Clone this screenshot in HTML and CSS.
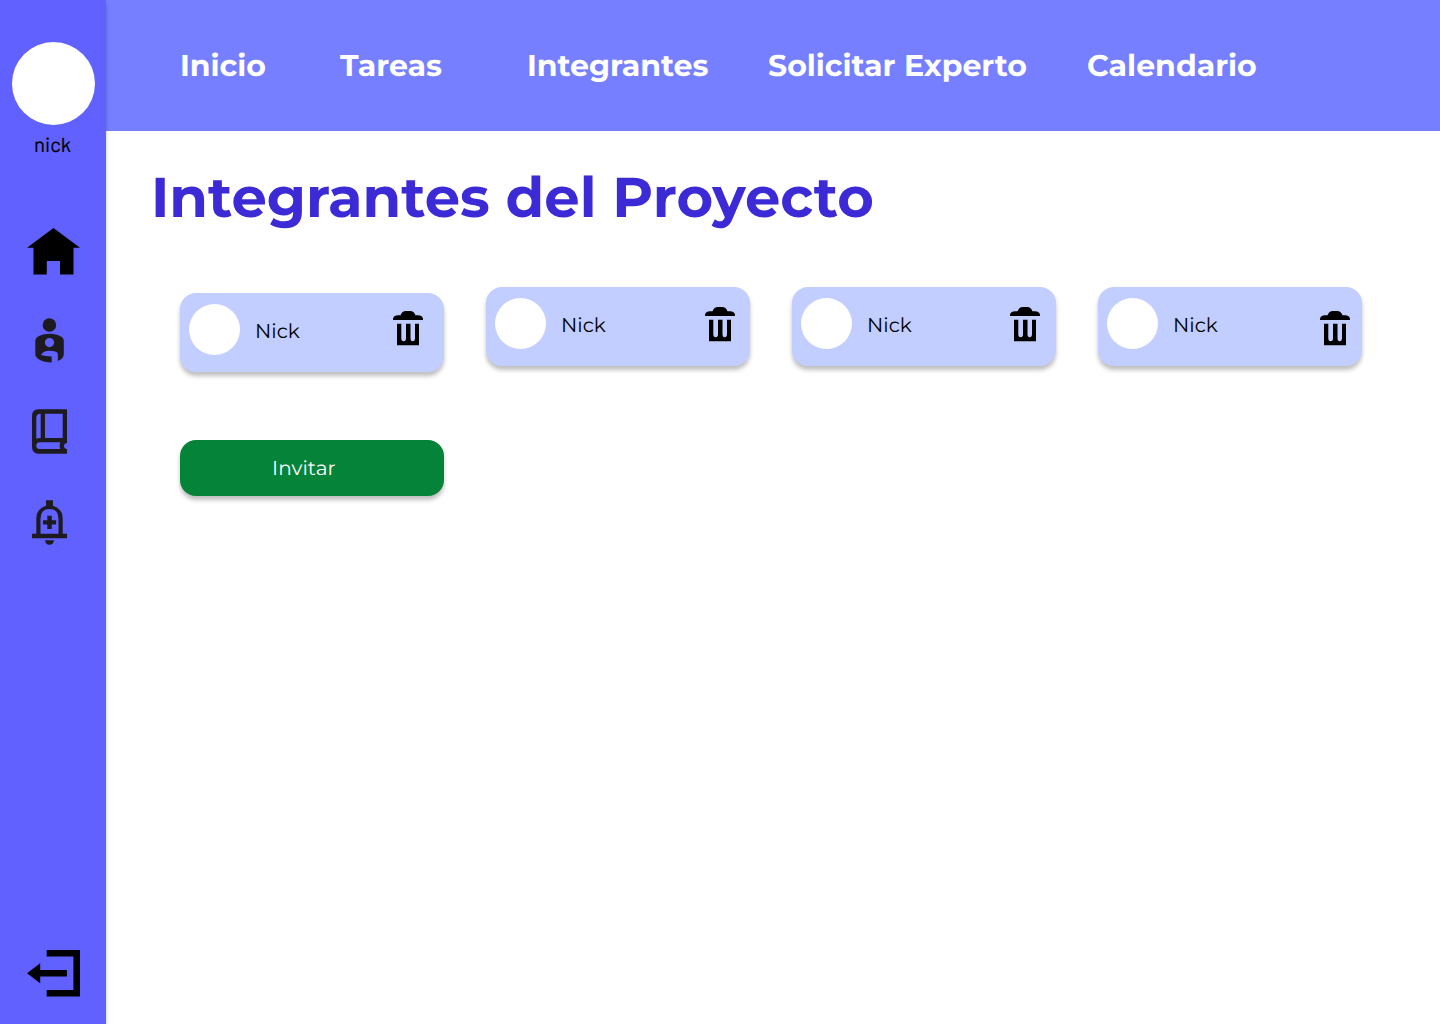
FILE: index.html
```html
<!DOCTYPE html>
<html lang="es">
<head>
<meta charset="utf-8">
<title>Integrantes del Proyecto</title>
<link rel="stylesheet" href="styles.css">
</head>
<body>
<svg class="symbols" aria-hidden="true">
  <symbol id="trash" viewBox="0 0 30 35">
    <path d="M0 9V8q.5-3.700 5-3.700h2.500Q9 0 13 0h4q4 0 5.500 4.300H25q4.500 0 5 3.700v1z"/>
    <path d="M4 12.700h4.300V27q0 3.300 2.400 3.300T13 27V12.700h4.500V27q0 3.300 2.200 3.300T22 27V12.700h4v21.600H4z"/>
  </symbol>
</svg>
<div class="app">
  <aside class="sidebar">
    <div class="profile-photo"></div>
    <div class="profile-name">nick</div>
    <nav class="side-nav">
      <svg class="icon-home" width="54" height="48" viewBox="26 228 54 48"><path d="M27 247.700 53.500 228 80 247.700h-6.500v26.800H60V261H46.800v13.500H33.500v-26.800z"/></svg>
      <svg class="icon-person" width="30" height="46" viewBox="35 318 30 46">
        <circle cx="49.400" cy="325" r="6.800"/>
        <path fill-rule="evenodd" d="M49.500 333.800q7 0 12 3 2.300 1.500 2.300 4V354q0 5-6 7v-7.500q-1-2.800-8.300-2.800-6.500 0-8.500 4.300 4.500 1.400 10.700 1.400v6.100q-7.500 0-13-3.300-3.400-2.200-3.400-5.200v-13.200q0-2.500 2.300-4 5-3 11.900-3zM49.500 338a4.600 4.600 0 1 0 0 9.200 4.600 4.600 0 0 0 0-9.200z"/>
      </svg>
      <svg class="icon-book" width="36" height="46" viewBox="32 409 36 46">
        <path fill-rule="evenodd" d="M38.500 409.300H67v33.800q-3 .3-3 3t3 3v4.600H38.500q-6.500-.5-6.500-7v-31q0-6 6.500-6.400zM40.700 413.700q-4.400 0-4.400 4v21.100q1.500-.8 4.400-.8zM45 413.700V438h17.700v-24.300zM40 442.300q-3.700 0-3.700 3.400T40 449h20.200q-1.200-3.300 0-6.700z"/>
      </svg>
      <svg class="icon-bell" width="36" height="46" viewBox="32 500 36 46">
        <path fill-rule="evenodd" d="M46 500.300h7v5.400q9.700 3.300 9.700 13v15H67v4.500H32v-4.500h4.300v-15q0-9.700 9.700-13zM49.500 509q-9 0-9 9.700v15h18v-15q0-9.700-9-9.700z"/>
        <path d="M47.300 515.700h4.500v4.500h4.300v4.400h-4.300v4.500h-4.500v-4.500H43v-4.400h4.300zM45 540.300h9q-.7 4.500-4.500 4.500T45 540.300z"/>
      </svg>
    </nav>
    <svg class="icon-exit" width="54" height="48" viewBox="27 950 54 48"><path d="M46.700 950H80v46.600H46.700V990h26.700v-33.400H46.700zM27 973.300l13.200-10v6.600h26.700v6.700H40.200v6.600z"/></svg>
  </aside>
  <header class="topbar">
    <a class="link-inicio">Inicio</a>
    <a class="link-tareas">Tareas</a>
    <a class="link-integrantes">Integrantes</a>
    <a class="link-experto">Solicitar Experto</a>
    <a class="link-calendario">Calendario</a>
  </header>
  <main class="content">
    <h1>Integrantes del Proyecto</h1>
    <section class="members">
      <article class="member member-lowered"><div class="avatar"></div><span class="name">Nick</span><svg class="trash trash-first"><use href="#trash"/></svg></article>
      <article class="member"><div class="avatar"></div><span class="name">Nick</span><svg class="trash trash-second"><use href="#trash"/></svg></article>
      <article class="member"><div class="avatar"></div><span class="name">Nick</span><svg class="trash trash-third"><use href="#trash"/></svg></article>
      <article class="member"><div class="avatar"></div><span class="name">Nick</span><svg class="trash trash-fourth"><use href="#trash"/></svg></article>
    </section>
    <button class="invite"><span>Invitar</span></button>
  </main>
</div>
</body>
</html>
```
FILE: styles.css
```css
* { box-sizing: border-box; }
body { margin: 0; background: #fff; font-family: Montserrat, Inter, sans-serif; color: #000; text-rendering: geometricPrecision; }
.symbols { display: none; }
svg { display: block; flex: none; }
.app { display: grid; grid-template: 131px 893px / 106px 1fr; height: 1024px; overflow: hidden; }

.sidebar { grid-row: 1 / 3; z-index: 1; display: flex; flex-direction: column; padding: 42px 0 26px; background: #6161ff; box-shadow: 0 4px 4px rgba(0, 0, 0, .25); }
.profile-photo { width: 83px; height: 83px; margin-left: 12px; border-radius: 50%; background: #fff; }
.profile-name { height: 24px; margin: 8px 0 0 34px; font: 400 20.4px/24px Barlow, Roboto, sans-serif; -webkit-text-stroke: .2px #000; }
.side-nav { display: flex; flex-direction: column; margin-top: 71px; fill: #1d1b20; }
.icon-home { margin-left: 26px; fill: #000; }
.icon-person { margin: 42px 0 0 35px; }
.icon-book { margin: 45px 0 0 32px; }
.icon-bell { margin: 45px 0 0 32px; }
.icon-exit { margin: auto 0 0 27px; }

.topbar { display: grid; grid-template-columns: 160px 187px 241px 319px 1fr; padding: 47px 0 0 74px; background: #767fff; color: #fff; font-weight: 700; font-size: 30px; line-height: 37px; white-space: nowrap; }

.content { padding: 32px 0 0 74px; }
h1 { margin: 0 0 0 -29px; color: #3b2ad6; font-size: 56px; line-height: 70px; font-weight: 700; white-space: nowrap; }
.members { display: flex; gap: 42px; height: 85px; margin-top: 54px; }
.member { display: flex; align-items: flex-start; width: 264px; height: 79px; border-radius: 16px; background: #c2ceff; box-shadow: 0 4px 4px rgba(0, 0, 0, .25); }
.member-lowered { margin-top: 6px; }
.avatar { width: 51px; height: 51px; margin: 11px 0 0 9px; border-radius: 50%; background: #fff; }
.name { margin: 27px 0 0 15px; font-size: 20px; line-height: 24px; }
.trash { width: 30px; height: 35px; margin-left: auto; }
.trash-first { margin-top: 18px; margin-right: 21px; }
.trash-second { margin-top: 20px; margin-right: 15px; }
.trash-third { margin-top: 20px; margin-right: 16px; }
.trash-fourth { margin-top: 24px; margin-right: 12px; }
.invite { display: flex; align-items: center; width: 264px; height: 56px; margin-top: 68px; padding: 2px 0 0 92px; border: 0; border-radius: 16px; background: #058339; box-shadow: 0 4px 4px rgba(0, 0, 0, .25); color: #fff; font: 400 20px/24px Montserrat, Inter, sans-serif; letter-spacing: .1px; text-rendering: geometricPrecision; }
```
